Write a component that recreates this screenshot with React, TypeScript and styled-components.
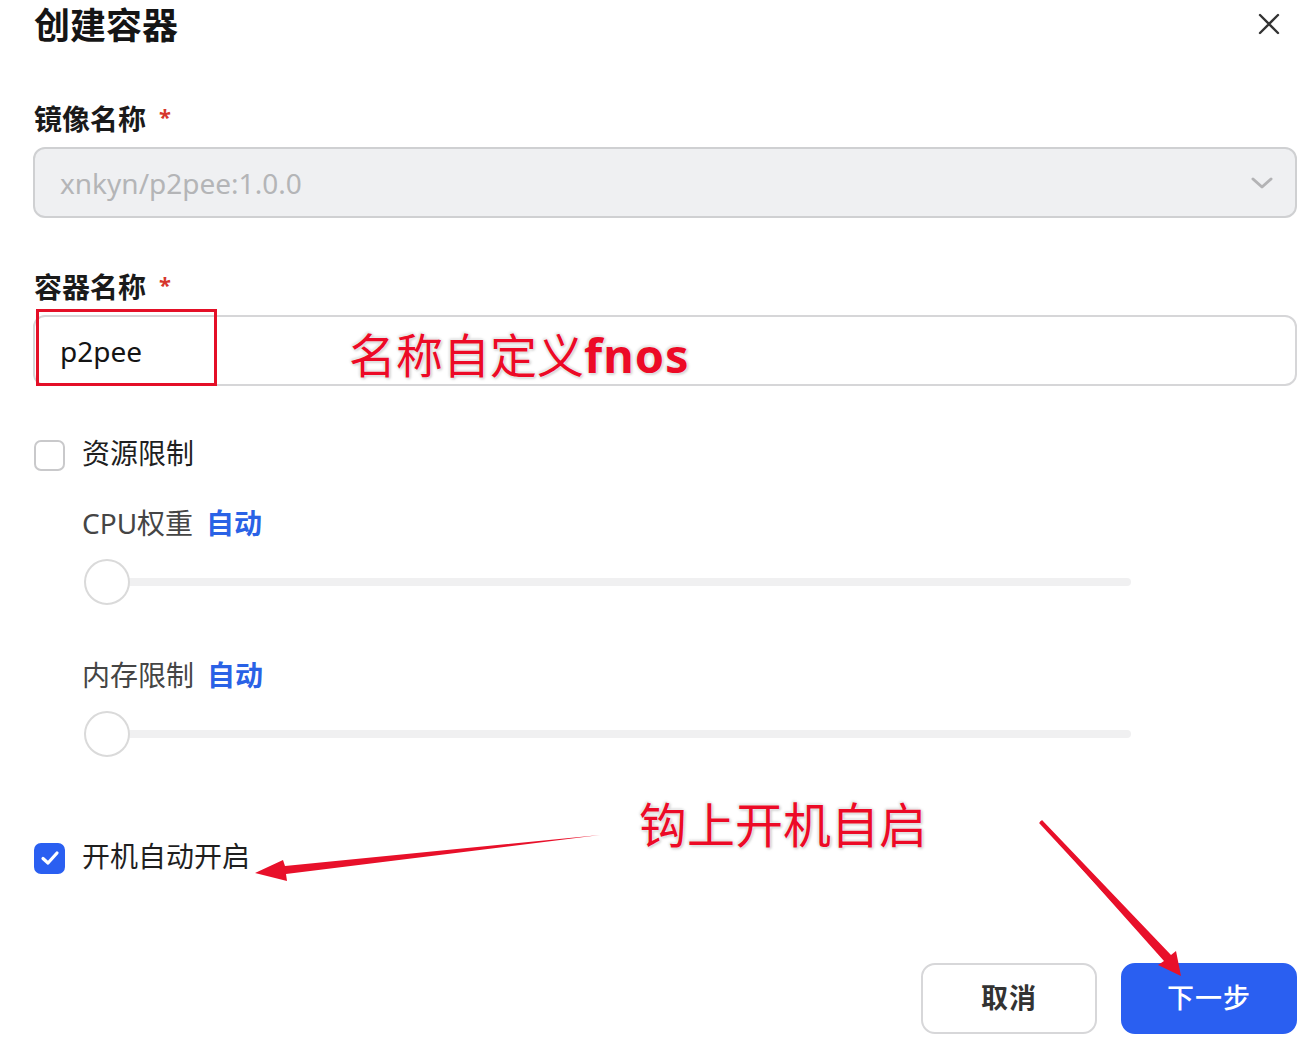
import React from "react";
import styled, { createGlobalStyle } from "styled-components";

const Global = createGlobalStyle`
  html, body { margin: 0; padding: 0; background: #ffffff; }
  body { font-family: "Noto Sans", "Noto Sans CJK SC", sans-serif; }
  * { box-sizing: border-box; }
`;

const Dialog = styled.div`
  position: relative;
  width: 1308px;
  height: 1050px;
  padding: 0 11px 0 33px;
  display: flex;
  flex-direction: column;
  overflow: hidden;
  color: #1d1d1f;
`;

const Header = styled.div`
  height: 52px;
  display: flex;
  align-items: center;
  justify-content: space-between;
`;

const Title = styled.h1`
  margin: 0 0 0 1px;
  font-size: 36px;
  line-height: 52px;
  font-weight: 700;
  color: #151515;
`;

const CloseButton = styled.button`
  width: 24px;
  height: 24px;
  margin: 0 16px 4px 0;
  padding: 0;
  border: none;
  background: none;
  display: flex;
  align-items: center;
  justify-content: center;
  color: #333;
`;

const Field = styled.div<{ $top: number }>`
  margin-top: ${(p) => p.$top}px;
  display: flex;
  flex-direction: column;
  gap: 10px;
`;

const Label = styled.div`
  display: flex;
  align-items: center;
  gap: 13px;
  padding-left: 1px;
  font-size: 28px;
  line-height: 36px;
  font-weight: 700;
  color: #1a1a1a;
`;

const Required = styled.span`
  color: #d6362c;
  font-size: 22px;
  line-height: 1;
  transform: translateY(-3px);
`;

const Select = styled.div`
  height: 71px;
  border: 2px solid #cfd0d2;
  border-radius: 12px;
  background: #eff0f2;
  display: flex;
  align-items: center;
  justify-content: space-between;
  padding: 0 22px 0 25px;
  font-size: 28px;
  color: #b4b5b7;
`;

const InputWrap = styled.div`
  position: relative;
`;

const Input = styled.div`
  height: 71px;
  border: 2px solid #d6d6d8;
  border-radius: 12px;
  background: #fff;
  display: flex;
  align-items: center;
  padding: 0 25px;
  font-size: 28px;
  color: #141414;
`;

const Highlight = styled.div`
  position: absolute;
  left: 3px;
  top: -6px;
  width: 181px;
  height: 77px;
  border: 3px solid #e40f27;
  pointer-events: none;
`;

const CheckRow = styled.label<{ $top: number }>`
  margin-top: ${(p) => p.$top}px;
  height: 36px;
  display: flex;
  align-items: center;
  gap: 17px;
  font-size: 28px;
  color: #1f1f1f;
`;

const CheckText = styled.span`
  line-height: 36px;
  margin-top: -5px;
`;

const Box = styled.span<{ $checked?: boolean }>`
  width: 31px;
  height: 31px;
  margin-left: 1px;
  border-radius: 7px;
  border: 2px solid ${(p) => (p.$checked ? "#2a5ff1" : "#c9c9cb")};
  background: ${(p) => (p.$checked ? "#2a5ff1" : "#fff")};
  display: flex;
  align-items: center;
  justify-content: center;
`;

const Limits = styled.div`
  padding-left: 49px;
  display: flex;
  flex-direction: column;
`;

const LimitLabel = styled.div<{ $top: number }>`
  margin-top: ${(p) => p.$top}px;
  font-size: 28px;
  line-height: 36px;
  color: #454545;
  display: flex;
  gap: 13px;
`;

const Auto = styled.span`
  color: #2a62e6;
  font-weight: 700;
`;

const Slider = styled.div`
  position: relative;
  margin-top: 18px;
  margin-left: 2px;
  width: 1047px;
  height: 46px;
  display: flex;
  align-items: center;
`;

const Track = styled.div`
  width: 100%;
  height: 8px;
  border-radius: 4px;
  background: #f0f0f1;
`;

const Thumb = styled.div`
  position: absolute;
  left: 0;
  top: 0;
  width: 46px;
  height: 46px;
  border-radius: 50%;
  border: 2px solid #dadada;
  background: #fff;
`;

const Footer = styled.div`
  margin-top: 87px;
  display: flex;
  justify-content: flex-end;
  gap: 24px;
`;

const Button = styled.button<{ $primary?: boolean }>`
  width: 176px;
  height: 71px;
  border-radius: 14px;
  border: 2px solid ${(p) => (p.$primary ? "#2a5ff1" : "#d7d7d9")};
  background: ${(p) => (p.$primary ? "#2a5ff1" : "#fff")};
  color: ${(p) => (p.$primary ? "#fff" : "#333")};
  font-family: "Noto Sans", "Noto Sans CJK SC", sans-serif;
  font-size: 27px;
  font-weight: ${(p) => (p.$primary ? 500 : 700)};
  letter-spacing: 1px;
  padding: 0 0 4px;
`;

const Note = styled.div<{ $x: number; $y: number; $size: number }>`
  position: absolute;
  left: ${(p) => p.$x}px;
  top: ${(p) => p.$y}px;
  font-family: "Noto Sans CJK SC", "Noto Sans", sans-serif;
  font-size: ${(p) => p.$size}px;
  line-height: 1;
  color: #ec0a26;
  white-space: nowrap;
  text-shadow: 0 0 2px #fff, 0 0 3px #fff, 1px 1px 3px rgba(0, 0, 0, 0.35),
    -1px -1px 3px rgba(0, 0, 0, 0.2);
  pointer-events: none;
`;

const Latin = styled.span`
  font-family: "Noto Sans", sans-serif;
  font-weight: 700;
  letter-spacing: 1px;
`;

const Arrows = styled.svg`
  position: absolute;
  left: 0;
  top: 0;
  pointer-events: none;
`;

function Range() {
  return (
    <Slider>
      <Track />
      <Thumb />
    </Slider>
  );
}

export default function App() {
  return (
    <>
      <Global />
      <Dialog>
        <Header>
          <Title>创建容器</Title>
          <CloseButton aria-label="关闭">
            <svg width="22" height="22" viewBox="0 0 22 22">
              <path d="M2 2 L20 20 M20 2 L2 20" stroke="#333" strokeWidth="2.4" strokeLinecap="round" />
            </svg>
          </CloseButton>
        </Header>

        <Field $top={49}>
          <Label>
            镜像名称<Required>*</Required>
          </Label>
          <Select>
            <span>xnkyn/p2pee:1.0.0</span>
            <svg width="22" height="14" viewBox="0 0 22 14">
              <path d="M2 3 L11 11 L20 3" fill="none" stroke="#b3b3b5" strokeWidth="3" strokeLinecap="round" strokeLinejoin="round" />
            </svg>
          </Select>
        </Field>

        <Field $top={51}>
          <Label>
            容器名称<Required>*</Required>
          </Label>
          <InputWrap>
            <Input>p2pee</Input>
            <Highlight />
          </InputWrap>
        </Field>

        <CheckRow $top={51}>
          <Box />
          <CheckText>资源限制</CheckText>
        </CheckRow>

        <Limits>
          <LimitLabel $top={32}>
            CPU权重<Auto>自动</Auto>
          </LimitLabel>
          <Range />
          <LimitLabel $top={52}>
            内存限制<Auto>自动</Auto>
          </LimitLabel>
          <Range />
        </Limits>

        <CheckRow $top={83}>
          <Box $checked>
            <svg width="20" height="16" viewBox="0 0 20 16">
              <path d="M3 8.5 L8 13 L17 3" fill="none" stroke="#fff" strokeWidth="3.2" strokeLinecap="round" strokeLinejoin="round" />
            </svg>
          </Box>
          <CheckText>开机自动开启</CheckText>
        </CheckRow>

        <Footer>
          <Button>取消</Button>
          <Button $primary>下一步</Button>
        </Footer>

        <Note $x={349} $y={329} $size={47}>
          名称自定义<Latin>fnos</Latin>
        </Note>
        <Note $x={639} $y={798} $size={48}>
          钩上开机自启
        </Note>

        <Arrows width="1308" height="1050" viewBox="0 0 1308 1050">
          <path d="M600 835 L285 866 L283 860 L255 873 L287 881 L286 874 Z" fill="#e8102a" />
          <path d="M1040 822 L1042 820 L1171 955 L1176 951 L1181 976 L1158 965 L1164 961 Z" fill="#e8102a" />
          <line x1="1040" y1="822" x2="1168" y2="960" stroke="#e8102a" strokeWidth="2.6" />
        </Arrows>
      </Dialog>
    </>
  );
}
